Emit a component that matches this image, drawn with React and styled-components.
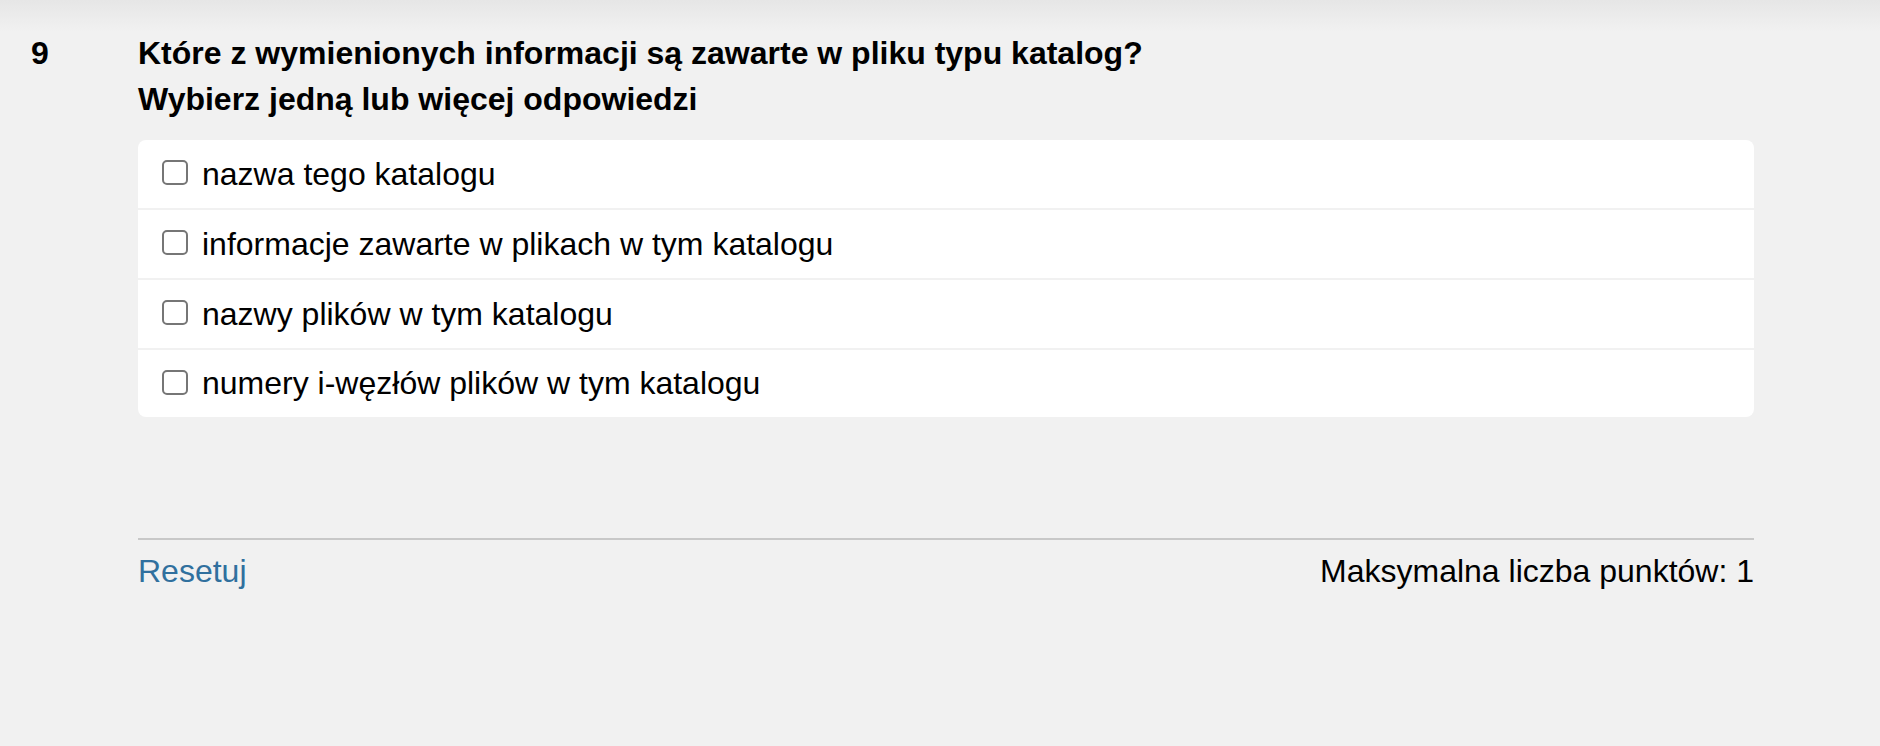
import React from 'react';
import styled, { createGlobalStyle } from 'styled-components';

const GlobalStyle = createGlobalStyle`
  html, body {
    margin: 0;
    padding: 0;
  }
  body {
    background: #f1f1f1;
    font-family: "Liberation Sans", Arial, sans-serif;
    color: #000;
  }
`;

const Page = styled.div`
  min-height: 746px;
  background: linear-gradient(to bottom, #e6e6e6 0, #f1f1f1 32px, #f1f1f1 100%);
`;

const Question = styled.div`
  display: grid;
  grid-template-columns: 138px 1616px;
  padding-top: 30px;
`;

const Number = styled.div`
  padding-left: 31px;
  font-size: 32px;
  font-weight: bold;
  line-height: 46px;
`;

const Body = styled.div`
  display: flex;
  flex-direction: column;
`;

const Title = styled.div`
  font-size: 32px;
  font-weight: bold;
  line-height: 46px;
`;

const Answers = styled.ul`
  list-style: none;
  margin: 18px 0 0;
  padding: 0;
  background: #fff;
  border-radius: 8px;
  overflow: hidden;
`;

const Answer = styled.li`
  display: flex;
  align-items: center;
  gap: 14px;
  height: ${props => (props.last ? '67px' : '68px')};
  padding: 0 24px;
  border-bottom: ${props => (props.last ? 'none' : '2px solid #f1f1f1')};
  cursor: pointer;
`;

const Box = styled.span`
  flex: none;
  width: 26px;
  height: 25px;
  box-sizing: border-box;
  border: 2px solid #767676;
  border-radius: 5px;
  background: #fff;
  margin-top: -3px;
`;

const AnswerText = styled.span`
  font-size: 32px;
`;

const Footer = styled.div`
  grid-column: 2;
  margin-top: 121px;
  border-top: 2px solid #c8c8c8;
  padding-top: 8px;
  display: flex;
  justify-content: space-between;
  font-size: 32px;
  line-height: 46px;
`;

const ResetLink = styled.a`
  color: #30709e;
  text-decoration: none;
  cursor: pointer;
`;

const MaxPoints = styled.span`
  color: #000;
`;

const answers = [
  'nazwa tego katalogu',
  'informacje zawarte w plikach w tym katalogu',
  'nazwy plików w tym katalogu',
  'numery i-węzłów plików w tym katalogu',
];

export default function App() {
  return (
    <Page>
      <GlobalStyle />
      <Question>
        <Number>9</Number>
        <Body>
          <Title>
            Które z wymienionych informacji są zawarte w pliku typu katalog?
            <br />
            Wybierz jedną lub więcej odpowiedzi
          </Title>
          <Answers>
            {answers.map((text, i) => (
              <Answer key={text} last={i === answers.length - 1}>
                <Box />
                <AnswerText>{text}</AnswerText>
              </Answer>
            ))}
          </Answers>
        </Body>
        <Footer>
          <ResetLink>Resetuj</ResetLink>
          <MaxPoints>Maksymalna liczba punktów: 1</MaxPoints>
        </Footer>
      </Question>
    </Page>
  );
}
